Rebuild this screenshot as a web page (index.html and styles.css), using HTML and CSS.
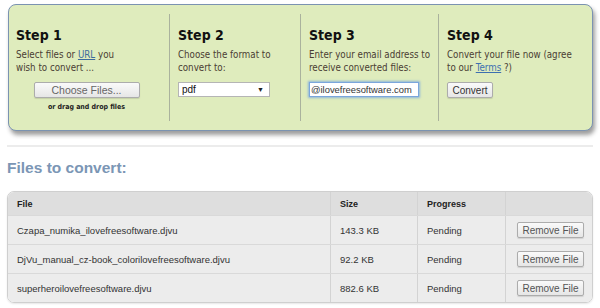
FILE: index.html
```html
<!DOCTYPE html>
<html>
<head>
<meta charset="utf-8">
<link rel="stylesheet" href="styles.css">
</head>
<body>
<div class="panel">
  <div class="step">
    <h2>Step 1</h2>
    <p class="narrow">Select files or <a href="#">URL</a> you wish to convert ...</p>
    <div class="center">
      <button class="btn choose">Choose Files...</button>
      <div class="drop">or drag and drop files</div>
    </div>
  </div>
  <div class="step">
    <h2>Step 2</h2>
    <p>Choose the format to convert to:</p>
    <div class="select"><span>pdf</span><span class="arrow">&#9660;</span></div>
  </div>
  <div class="step">
    <h2>Step 3</h2>
    <p>Enter your email address to receive converted files:</p>
    <div class="email">@ilovefreesoftware.com</div>
  </div>
  <div class="step last-step">
    <h2>Step 4</h2>
    <p>Convert your file now (agree to our <a href="#" class="terms">Terms</a> ?)</p>
    <button class="btn convert">Convert</button>
  </div>
</div>
<div class="rule"></div>
<h1 class="title">Files to convert:</h1>
<div class="table">
  <div class="row head">
    <div class="c1">File</div><div class="c2">Size</div><div class="c3">Progress</div><div class="c4"></div>
  </div>
  <div class="row">
    <div class="c1">Czapa_numika_ilovefreesoftware.djvu</div><div class="c2">143.3 KB</div><div class="c3">Pending</div><div class="c4"><button class="btn remove">Remove File</button></div>
  </div>
  <div class="row">
    <div class="c1">DjVu_manual_cz-book_colorilovefreesoftware.djvu</div><div class="c2">92.2 KB</div><div class="c3">Pending</div><div class="c4"><button class="btn remove">Remove File</button></div>
  </div>
  <div class="row last">
    <div class="c1">superheroilovefreesoftware.djvu</div><div class="c2">882.6 KB</div><div class="c3">Pending</div><div class="c4"><button class="btn remove">Remove File</button></div>
  </div>
</div>
</body>
</html>
```
FILE: styles.css
```css
html, body { margin: 0; padding: 0; background: #fff; }
body { width: 600px; height: 308px; overflow: hidden; }

.panel {
  margin: 4px 0 0 8px;
  width: 583px;
  height: 107px;
  padding: 9px 0;
  border: 1.5px solid #7b93b1;
  border-radius: 8px;
  background: #dfecbd;
  box-shadow: 2px 4px 4px rgba(40, 40, 40, 0.45);
  display: grid;
  grid-template-columns: 160px 131px 138px 1fr;
}
.step {
  padding: 0 4px 0 8px;
  border-left: 1px solid #aab29d;
  font-family: "DejaVu Sans Condensed", "DejaVu Sans", sans-serif;
}
.step:first-child { border-left: none; padding-left: 7px; }
.step.last-step { padding-right: 12px; }
.step h2 {
  margin: 13px 0 0;
  font-size: 14px;
  line-height: 17px;
  font-weight: bold;
  color: #111;
}
.step p {
  margin: 4px 0 0;
  font-size: 9.7px;
  line-height: 13px;
  color: #4a3d33;
}
.step p.narrow { max-width: 118px; }
.step a { color: #3d6b9c; text-decoration: underline; }
.step a.terms { color: #3d6fb0; }

.center { display: flex; flex-direction: column; align-items: center; margin-top: 8px; padding-right: 8px; }

.btn {
  font-family: "Liberation Sans", Arial, sans-serif;
  background: linear-gradient(#fafafa, #e6e6e6);
  border: 1px solid #acacac;
  border-radius: 2px;
  color: #555;
  padding: 0;
  margin: 0;
  box-shadow: 0 1px 1px rgba(0,0,0,0.12);
}
.choose { width: 106px; height: 16px; font-size: 10.5px; color: #666; }
.drop {
  margin-top: 5px;
  font-family: "DejaVu Sans Condensed", "DejaVu Sans", sans-serif;
  font-size: 7px;
  font-weight: bold;
  color: #222;
}
.select {
  margin-top: 8px;
  height: 13px;
  background: #fff;
  border: 1px solid #b5b5b5;
  display: flex;
  align-items: center;
  justify-content: space-between;
  padding: 0 5px 0 3px;
  box-sizing: content-box;
  width: 82px;
  font-family: "Liberation Sans", Arial, sans-serif;
  font-size: 10px;
  color: #111;
}
.select .arrow { font-size: 7px; color: #222; }
.email {
  margin-top: 8px;
  width: 107px;
  height: 13px;
  border: 1px solid #7aa6dc;
  box-shadow: 0 0 2px 1px rgba(110, 160, 230, 0.7);
  background: #fff;
  font-family: "Liberation Sans", Arial, sans-serif;
  font-size: 9.4px;
  line-height: 13px;
  color: #333;
  overflow: hidden;
  white-space: nowrap;
  padding-left: 1px;
}
.convert { margin-top: 8px; width: 46px; height: 16px; font-size: 10px; color: #333; }

.rule {
  margin: 14px 0 0 7px;
  width: 586px;
  height: 2px;
  background: #ececec;
}
.title {
  margin: 12px 0 0 7px;
  font-family: "Liberation Sans", Arial, sans-serif;
  font-size: 15.5px;
  line-height: 18px;
  font-weight: bold;
  color: #7b96b5;
}
.table {
  margin: 14px 0 0 7px;
  width: 584px;
  border: 1px solid #cfcfcf;
  border-radius: 7px;
  overflow: hidden;
  font-family: "Liberation Sans", Arial, sans-serif;
  font-size: 9.5px;
  color: #333;
  box-shadow: 0 1px 2px rgba(0,0,0,0.1);
}
.row {
  display: grid;
  grid-template-columns: 322px 87px 88px 1fr;
  height: 28px;
  background: #ececec;
  border-bottom: 1px solid #d9d9d9;
}
.row.last { border-bottom: none; height: 28px; }
.row.head { height: 23px; background: #dedede; font-weight: bold; color: #222; font-size: 9px; }
.row > div {
  display: flex;
  align-items: center;
  padding-left: 9px;
  border-left: 1px solid #d3d3d3;
}
.row > .c1 { border-left: none; padding-left: 9px; }
.row > .c4 { justify-content: flex-end; padding-right: 8px; }
.remove { width: 67px; height: 16px; font-size: 10px; color: #555; }
```
